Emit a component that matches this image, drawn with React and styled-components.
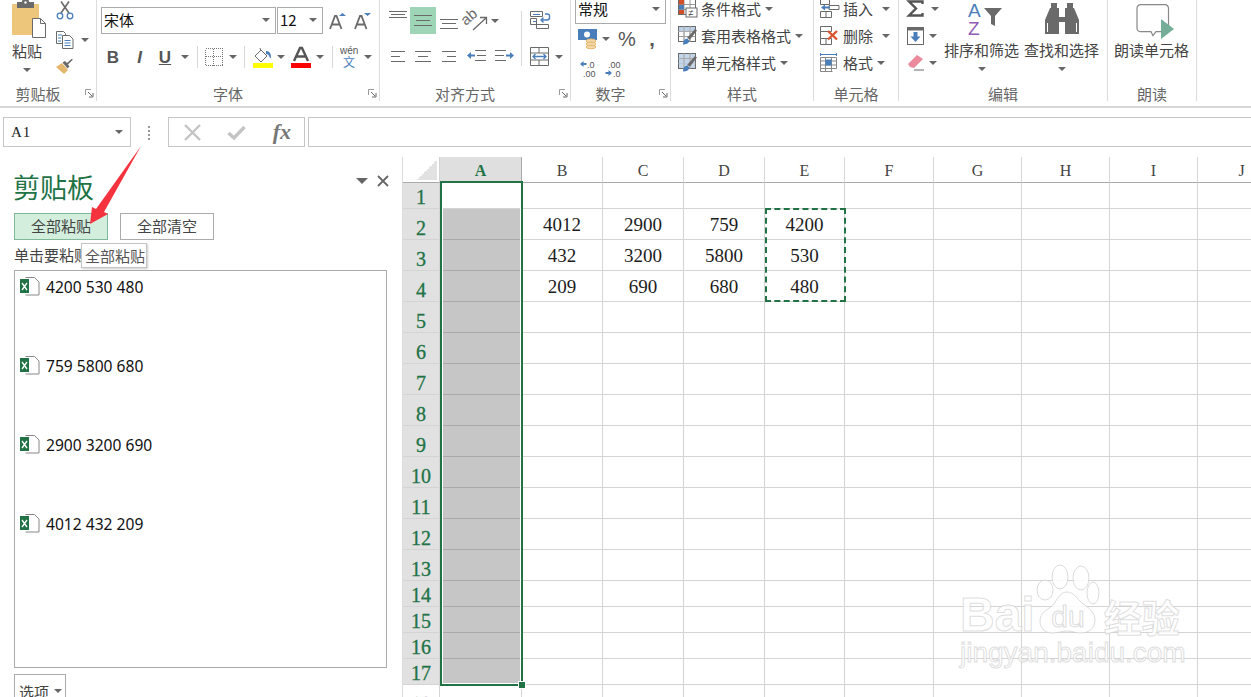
import React from "react";
import styled, { createGlobalStyle } from "styled-components";

const UI = `"Noto Sans CJK SC", "Noto Sans", sans-serif`;
const SERIF = `"Liberation Serif", "Noto Sans CJK SC", serif`;
const GREEN = "#217346";
const GRAY = "#6a6a6a";
const BLUE = "#4a7ebb";

const Global = createGlobalStyle`
  html, body { margin: 0; padding: 0; background: #fff; overflow: hidden; }
  * { box-sizing: border-box; }
`;

const Page = styled.div`
  position: relative;
  width: 1251px;
  height: 697px;
  overflow: hidden;
  font-family: ${UI};
  color: #444;
  background: #fff;
`;

/* ---------- ribbon ---------- */
const Ribbon = styled.div`
  display: flex;
  height: 113px;
  margin-top: -5px;
  padding-bottom: 5px;
  border-bottom: 2px solid #d6d6d6;
`;
const Group = styled.div`
  position: relative;
  display: flex;
  flex-direction: column;
  width: ${(p) => p.$w}px;
  border-right: 1px solid #dcdcdc;
`;
const GroupBody = styled.div`
  flex: 1;
  display: flex;
  min-height: 0;
  padding-left: ${(p) => p.$pl || 0}px;
`;
const GroupLabel = styled.div`
  height: 16px;
  margin-bottom: -1px;
  padding-right: ${(p) => (p.$inset ? 20 : 0)}px;
  font-size: 15px;
  line-height: 16px;
  text-align: center;
  color: #666;
`;
const Launcher = styled.svg`
  position: absolute;
  right: 2px;
  bottom: 3px;
  width: 9px;
  height: 9px;
`;
const Caret = styled.i`
  display: block;
  flex: none;
  width: 0;
  height: 0;
  margin-left: ${(p) => p.$ml || 0}px;
  border-left: 4px solid transparent;
  border-right: 4px solid transparent;
  border-top: 4px solid #666;
`;
const BigButton = styled.div`
  display: flex;
  flex-direction: column;
  align-items: center;
  width: ${(p) => p.$w || 75}px;
  margin-left: ${(p) => p.$ml || 0}px;
`;
const BigIcon = styled.div`
  display: flex;
  align-items: flex-end;
  justify-content: ${(p) => (p.$left ? "flex-start" : "center")};
  height: ${(p) => p.$h || 42}px;
  padding-left: ${(p) => p.$pl || 0}px;
  width: 100%;
`;
const BigText = styled.div`
  margin-top: ${(p) => p.$mt ?? 3}px;
  font-size: 15px;
  line-height: 20px;
  white-space: nowrap;
`;
const BigCaret = styled(Caret)`
  margin-top: 7px;
`;
const SmallColumn = styled.div`
  display: flex;
  flex-direction: column;
  flex: none;
  width: ${(p) => (p.$w ? `${p.$w}px` : "auto")};
  margin-left: ${(p) => p.$ml || 0}px;
  padding-top: ${(p) => p.$pt || 0}px;
  gap: ${(p) => p.$gap || 0}px;
`;
const SmallItem = styled.div`
  display: flex;
  align-items: center;
  height: ${(p) => p.$h || 27}px;
`;
const FontFields = styled.div`
  display: flex;
  flex-direction: column;
  padding-top: 12px;
  gap: 11px;
`;
const ToolRow = styled.div`
  display: flex;
  align-items: center;
  height: ${(p) => p.$h || 24}px;
  margin-top: ${(p) => p.$mt || 0}px;
`;
const Select = styled.div`
  display: flex;
  align-items: center;
  justify-content: space-between;
  width: ${(p) => p.$w}px;
  height: ${(p) => p.$h || 27}px;
  padding: 0 5px 2px 2px;
  border: 1px solid #ababab;
  margin-left: ${(p) => p.$ml || 0}px;
  font-size: 15px;
  color: #111;
`;
const Tool = styled.div`
  display: flex;
  align-items: center;
  justify-content: center;
  flex: none;
  width: ${(p) => p.$w}px;
  height: ${(p) => p.$h || 24}px;
  margin-left: ${(p) => p.$ml || 0}px;
  background: ${(p) => (p.$on ? "#9fd5b7" : "transparent")};
`;
const Glyph = styled.span`
  font-family: "Liberation Sans", sans-serif;
  font-size: ${(p) => p.$size || 17}px;
  font-weight: ${(p) => (p.$light ? 400 : 700)};
  font-style: ${(p) => (p.$italic ? "italic" : "normal")};
  text-decoration: ${(p) => (p.$under ? "underline" : "none")};
  color: ${(p) => p.$color || "#555"};
  line-height: 1;
`;
const RowSep = styled.i`
  display: block;
  flex: none;
  width: 1px;
  height: 22px;
  margin-left: ${(p) => p.$ml || 0}px;
  background: #d8d8d8;
`;
const AlignTools = styled.div`
  display: flex;
  flex-direction: column;
  width: 135px;
  padding-top: 12px;
  gap: 10px;
`;
const AlignSep = styled.i`
  display: block;
  flex: none;
  width: 1px;
  height: 55px;
  margin-top: 16px;
  background: #d8d8d8;
`;
const WrapTools = styled.div`
  display: flex;
  flex-direction: column;
  padding: 16px 0 0 8px;
  gap: 18px;
`;
const StyleList = styled.div`
  display: grid;
  grid-template-rows: repeat(3, 27px);
`;
const StyleItem = styled.div`
  display: flex;
  align-items: center;
  font-size: 15px;
  line-height: 20px;
  gap: 4px;
`;

/* ---------- formula bar ---------- */
const FormulaBar = styled.div`
  display: flex;
  align-items: flex-start;
  height: 49px;
  padding: 9px 0 0 3px;
`;
const NameBox = styled.div`
  display: flex;
  align-items: center;
  justify-content: space-between;
  width: 128px;
  height: 30px;
  padding: 0 7px;
  border: 1px solid #c6c6c6;
  font-family: ${SERIF};
  font-size: 15px;
  letter-spacing: 1px;
  color: #222;
`;
const DragDots = styled.div`
  display: flex;
  flex-direction: column;
  gap: 2px;
  width: 37px;
  padding: 9px 0 0 17px;
  i { display: block; width: 2px; height: 2px; background: #999; }
`;
const FormulaButtons = styled.div`
  display: flex;
  align-items: center;
  justify-content: space-between;
  width: 137px;
  height: 30px;
  padding: 0 13px 0 15px;
  border: 1px solid #c6c6c6;
`;
const FxMark = styled.span`
  font-family: "Liberation Serif", serif;
  font-style: italic;
  font-weight: 700;
  font-size: 22px;
  line-height: 1;
  color: #777;
`;
const FormulaInput = styled.div`
  flex: 1;
  height: 30px;
  margin-left: 3px;
  border: 1px solid #c6c6c6;
  border-right: 0;
`;

/* ---------- main ---------- */
const Main = styled.div`
  display: flex;
  height: 540px;
`;
const Pane = styled.div`
  flex: none;
  width: 403px;
  padding-left: 14px;
  border-right: 1px solid #dcdcdc;
`;
const PaneHead = styled.div`
  display: flex;
  align-items: center;
  height: 56px;
  padding-top: 4px;
`;
const PaneTitle = styled.div`
  flex: 1;
  margin-left: -1px;
  font-size: 27px;
  line-height: 36px;
  color: ${GREEN};
`;
const PaneActions = styled.div`
  display: flex;
  align-items: center;
  gap: 9px;
  padding-right: 13px;
  margin-bottom: 12px;
`;
const PaneCaret = styled.i`
  display: block;
  width: 0;
  height: 0;
  border-left: 6px solid transparent;
  border-right: 6px solid transparent;
  border-top: 6px solid #666;
`;
const ButtonRow = styled.div`
  display: flex;
  gap: 12px;
`;
const PaneButton = styled.div`
  display: flex;
  align-items: center;
  justify-content: center;
  width: 94px;
  height: 27px;
  padding-bottom: 2px;
  font-size: 15px;
  border: 1px solid ${(p) => (p.$active ? "#7fb99a" : "#ababab")};
  background: ${(p) => (p.$active ? "#d3eedd" : "#fff")};
`;
const Hint = styled.div`
  height: 30px;
  font-size: 15px;
  line-height: 29px;
`;
const ClipList = styled.div`
  width: 373px;
  height: 398px;
  padding-left: 5px;
  border: 1px solid #ababab;
`;
const ClipItem = styled.div`
  display: flex;
  gap: 6px;
  height: 79px;
  padding-top: 6px;
  font-family: "Noto Sans", sans-serif;
  font-size: 15.6px;
  line-height: 20px;
  color: #111;
`;
const OptionsButton = styled.div`
  display: flex;
  align-items: center;
  gap: 5px;
  width: 52px;
  height: 34px;
  margin-top: 6px;
  padding-left: 4px;
  border: 1px solid #ababab;
  font-size: 15px;
  white-space: nowrap;
`;

const Sheet = styled.div`
  position: relative;
  flex: 1;
  overflow: hidden;
`;
const SheetGrid = styled.div`
  display: grid;
  width: 920px;
  grid-template-columns: 37px 82px 81px 81px 81px 80px 89px 88px 88px 88px 88px;
  grid-template-rows: 26px ${(p) => p.$rows};
`;
const Corner = styled.div`
  border-bottom: 1px solid #aaa;
  border-right: 1px solid #d4d4d4;
  background: linear-gradient(135deg, #fff 50%, #e2e2e2 50%) no-repeat right 2px bottom 2px / 20px 20px;
`;
const ColHead = styled.div`
  display: flex;
  justify-content: center;
  padding-top: 4px;
  font-family: ${SERIF};
  font-size: 16px;
  line-height: 20px;
  border-right: 1px solid ${(p) => (p.$on ? "#aaa" : "#d8d8d8")};
  border-bottom: 1px solid #aaa;
  color: ${(p) => (p.$on ? GREEN : "#444")};
  font-weight: ${(p) => (p.$on ? 700 : 400)};
  background: ${(p) => (p.$on ? "#dfdfdf" : "#fff")};
`;
const RowHead = styled.div`
  display: flex;
  align-items: flex-end;
  justify-content: center;
  font-family: ${SERIF};
  font-size: 20px;
  line-height: 22px;
  -webkit-text-stroke: 0.3px ${(p) => (p.$on ? GREEN : "#555")};
  color: ${(p) => (p.$on ? GREEN : "#555")};
  background: ${(p) => (p.$on ? "#e1e1e1" : "#fff")};
  border-right: 1px solid #d4d4d4;
  border-bottom: 1px solid #d4d4d4;
`;
const Cell = styled.div`
  display: flex;
  align-items: flex-end;
  justify-content: center;
  padding-bottom: 2px;
  font-family: ${SERIF};
  font-size: 19px;
  line-height: 24px;
  color: #1c1c1c;
  background: ${(p) => (p.$sel ? "#c6c6c6" : "#fff")};
  border-right: 1px solid #d4d4d4;
  border-bottom: 1px solid ${(p) => (p.$sel ? "#a9a9a9" : "#d4d4d4")};
`;
const Selection = styled.div`
  position: absolute;
  left: 37px;
  top: 24px;
  width: 83px;
  height: 505px;
  border: 2px solid ${GREEN};
  box-shadow: inset 0 0 0 1px #fff;
  pointer-events: none;
`;
const FillHandle = styled.i`
  position: absolute;
  right: -4px;
  bottom: -4px;
  width: 6px;
  height: 6px;
  background: ${GREEN};
  outline: 1px solid #fff;
`;
const Marquee = styled.div`
  position: absolute;
  left: 362px;
  top: 51px;
  width: 81px;
  height: 94px;
  border: 2px dashed ${GREEN};
`;

/* ---------- overlays ---------- */
const Tooltip = styled.div`
  position: absolute;
  left: 81px;
  top: 243px;
  width: 66px;
  height: 25px;
  padding-left: 3px;
  border: 1px solid #c4c4c4;
  background: #fff;
  box-shadow: 1px 1px 2px rgba(0, 0, 0, 0.2);
  font-size: 15px;
  line-height: 23px;
  color: #555;
  white-space: nowrap;
`;
const Arrow = styled.svg`
  position: absolute;
  left: 85px;
  top: 143px;
  width: 60px;
  height: 85px;
`;
const Watermark = styled.div`
  position: absolute;
  left: 960px;
  top: 563px;
  pointer-events: none;
  color: rgba(255, 255, 255, 0.85);
  -webkit-text-stroke: 1px rgba(200, 200, 200, 0.6);
`;
const MarkRow = styled.div`
  display: flex;
  align-items: flex-end;
  height: 72px;
`;
const MarkBai = styled.span`
  font-family: "Liberation Sans", sans-serif;
  font-weight: 700;
  font-size: 48px;
  line-height: 52px;
  margin-right: 2px;
  margin-bottom: -6px;
`;
const MarkCn = styled.span`
  font-family: ${UI};
  font-weight: 700;
  font-size: 38px;
  line-height: 44px;
  margin-left: 5px;
  margin-bottom: -3px;
  white-space: nowrap;
`;
const MarkUrl = styled.div`
  margin-top: 1px;
  font-family: "Liberation Sans", sans-serif;
  font-size: 28px;
  line-height: 34px;
  white-space: nowrap;
`;

/* ---------- icons ---------- */
const Svg = ({ w, h, children }) => (
  <svg width={w} height={h} viewBox={`0 0 ${w} ${h}`} fill="none" style={{ display: "block", flex: "none", overflow: "visible" }}>
    {children}
  </svg>
);

const PasteIcon = () => (
  <Svg w={35} h={39}>
    <rect x="0" y="5" width="27" height="31" rx="1" fill="#edc67c" />
    <path d="M5 3h5a3 3 0 0 1 7 0h5v6H5z" fill={GRAY} />
    <circle cx="13.5" cy="3.5" r="1.2" fill="#fff" />
    <path d="M20.5 19.5h8l5 5v14h-13z" fill="#fff" stroke={GRAY} />
    <path d="M28.5 19.5v5h5" stroke={GRAY} />
  </Svg>
);
const ScissorsIcon = () => (
  <Svg w={18} h={19}>
    <path d="M5 0.5l8 11.5M13 0.5L5 12" stroke={GRAY} strokeWidth="1.6" />
    <circle cx="4" cy="15" r="2.8" stroke={BLUE} strokeWidth="1.3" />
    <circle cx="14" cy="15" r="2.8" stroke={BLUE} strokeWidth="1.3" />
  </Svg>
);
const CopyIcon = () => (
  <Svg w={18} h={18}>
    <path d="M0.5 0.5h7l2 2v10h-9z" fill="#fff" stroke={GRAY} />
    <path d="M6.5 4.5h7l3.5 3.5v9.5H6.5z" fill="#fff" stroke={GRAY} />
    <path d="M2 4h4M2 7h3M2 10h3M8.5 9.5h6M8.5 12h6M8.5 14.5h6" stroke={BLUE} />
  </Svg>
);
const BrushIcon = () => (
  <Svg w={18} h={16}>
    <path d="M0 8l6-4 6 7-4 4z" fill="#e3b76e" />
    <path d="M6.5 3.5l5 6 2-2-1.5-2 5-5-1.5-.5-4.5 4-2-2z" fill={GRAY} />
  </Svg>
);
const GrowIcon = ({ down }) => (
  <Svg w={17} h={18}>
    <path d={down ? "M10 1h7l-3.5 3z" : "M10 4h7l-3.5-3z"} fill={BLUE} />
    <path d="M1 17L6 4h1.5l5 13M3 12.5h7.5" stroke={GRAY} strokeWidth="1.8" />
  </Svg>
);
const BordersIcon = () => (
  <Svg w={18} h={18}>
    <path d="M.5.5h17v17H.5zM8.500 .5v17M.5 8.500h17" stroke="#777" strokeDasharray="1 1" shapeRendering="crispEdges" />
  </Svg>
);
const FillIcon = () => (
  <Svg w={21} h={21}>
    <path d="M3 9l6-6 6 6-6 6z" fill="#fff" stroke={GRAY} />
    <path d="M8 1l1 3" stroke={GRAY} />
    <path d="M14 4c3 0 5 2 5 6 0 1-1 1.500-1.500 0-.5-2-1.500-3-3.500-3z" fill={BLUE} />
    <rect x="1" y="16" width="20" height="5" fill="#ffff00" />
  </Svg>
);
const FontColorIcon = () => (
  <Svg w={20} h={21}>
    <path d="M3 14L9 1h2l6 13M5.500 9.500h9" stroke="#555" strokeWidth="2.400" />
    <rect x="0" y="16" width="20" height="5" fill="#ff0000" />
  </Svg>
);
const WenIcon = () => (
  <Svg w={18} h={23}>
    <text x="0" y="8" fontFamily="Liberation Sans" fontSize="10" fill="#555">wén</text>
    <text x="3" y="21" fontFamily="Noto Sans CJK SC" fontSize="12" fill={BLUE}>文</text>
  </Svg>
);
const Lines = ({ w = 18, h = 24, rows }) => (
  <Svg w={w} h={h}>
    {rows.map(([x1, x2, y]) => (
      <path key={`${x1}-${y}`} d={`M${x1} ${y}.5H${x2}`} stroke={GRAY} />
    ))}
  </Svg>
);
const OrientIcon = () => (
  <Svg w={23} h={20}>
    <text x="0" y="13" transform="rotate(-40 3 13)" fontFamily="Liberation Sans" fontSize="15" fill={GRAY}>ab</text>
    <path d="M8 19l13-12M15 6.500h6.500V13" stroke={GRAY} strokeWidth="1.300" />
  </Svg>
);
const IndentIcon = ({ flip }) => (
  <Svg w={19} h={14}>
    <g transform={flip ? "translate(19 0) scale(-1 1)" : undefined}>
      <path d="M8 1.500h11M10 6.500h9M8 11.500h11" stroke={GRAY} />
      <path d="M0 6.500L4 3v2.500h4v2H4V10z" fill={BLUE} />
    </g>
  </Svg>
);
const WrapIcon = () => (
  <Svg w={20} h={18}>
    <path d="M.5.5h12v5H.5zM.5 7.500h6v10h12v-4H.5z" stroke={GRAY} />
    <path d="M3 3.500h7M3 10.500h3" stroke={BLUE} />
    <path d="M15 3h2.500a2 2 0 0 1 2 2v1.500a2.500 2.500 0 0 1-2.500 2.500h-5M13.500 6.500L11 9l2.500 2.500" stroke={BLUE} strokeWidth="1.400" />
  </Svg>
);
const MergeIcon = () => (
  <Svg w={19} h={19}>
    <path d="M.5.500h18v18H.5zM.5 6h18M.5 13h18M9 .5V6M9 13v5.500" stroke={GRAY} />
    <path d="M3 9.500h13M5.500 7L3 9.500 5.500 12M13.500 7l2.500 2.500-2.500 2.500" stroke={BLUE} strokeWidth="1.300" />
  </Svg>
);
const MoneyIcon = () => (
  <Svg w={20} h={20}>
    <rect x="0" y="0" width="19" height="11" fill={BLUE} />
    <circle cx="9" cy="5.500" r="3" fill="#fff" />
    <ellipse cx="13" cy="12" rx="5" ry="2" fill="#f3d8a6" stroke="#e3b76e" />
    <ellipse cx="13" cy="15" rx="5" ry="2" fill="#f3d8a6" stroke="#e3b76e" />
    <ellipse cx="13" cy="18" rx="5" ry="1.700" fill="#f3d8a6" stroke="#e3b76e" />
  </Svg>
);
const DecimalIcon = ({ more }) => (
  <Svg w={16} h={18}>
    <text x={more ? 7 : 3} y="7.500" fontFamily="Liberation Sans" fontSize="9" fill="#555">{more ? ".0" : ".00"}</text>
    <text x={more ? 3 : 8} y="16.500" fontFamily="Liberation Sans" fontSize="9" fill="#555">{more ? ".00" : ".0"}</text>
    {more ? (
      <path d="M0 4l3.500-3v2h3v2h-3v2z" fill={BLUE} />
    ) : (
      <path d="M7 13l-3.500-3v2h-3v2h3v2z" fill={BLUE} />
    )}
  </Svg>
);
const TableBase = () => (
  <>
    <rect x=".5" y=".5" width="17" height="15" fill="#fff" stroke={GRAY} />
    <path d="M.5 5.500h17M.5 10.500h17M6 .5v15M12 .5v15" stroke="#999" />
  </>
);
const CondIcon = () => (
  <Svg w={19} h={19}>
    <TableBase />
    <rect x="1" y="1" width="5" height="4.500" fill="#d24f2a" />
    <rect x="1" y="6" width="5" height="4.500" fill={BLUE} />
    <rect x="1" y="11" width="5" height="4" fill="#d24f2a" />
    <rect x="8" y="9" width="11" height="9" fill="#fff" stroke={GRAY} />
    <text x="10.500" y="16.500" fontFamily="Liberation Sans" fontSize="9" fill="#444">≠</text>
  </Svg>
);
const TableBrushIcon = ({ tint }) => (
  <Svg w={19} h={19}>
    <TableBase />
    <rect x="1" y="1" width="16" height={tint ? 14 : 4} fill="#bcd0e6" opacity={tint ? 0.9 : 1} />
    <path d="M.5 5.500h17M6 .5v15M12 .5v15" stroke="#aaa" />
    <path d="M9 12l8-9 2 1.500-7 9z" fill={GRAY} />
    <path d="M5 18.500c0-4 2-5.500 4-6l2.500 2c-1 3-3 4-6.500 4z" fill={BLUE} />
  </Svg>
);
const InsertIcon = () => (
  <Svg w={19} h={19}>
    <path d="M.5.500h9v5h-9zM.5 12.500h11v6H.5zM6 12.500v6" stroke={GRAY} />
    <path d="M9 6.500h10v4H9z" stroke={GRAY} fill="#fff" />
    <path d="M1 8.500l4-3v2h5v2H5v2z" fill={BLUE} />
  </Svg>
);
const DeleteIcon = () => (
  <Svg w={19} h={19}>
    <path d="M.5.500h11v5H.5zM.5 12.500h11v6H.5zM6 12.500v6M.5 5.500v7" stroke={GRAY} />
    <path d="M8 5l9 8.500M17 5l-9 8.500" stroke="#d9552f" strokeWidth="2.400" />
  </Svg>
);
const FormatIcon = () => (
  <Svg w={19} h={19}>
    <path d="M.5 1.500h16M.5 0v3M16.500 0v3" stroke={BLUE} />
    <path d="M.5 4.500h16v11H.5zM.5 8h16M.5 12h16M5.500 4.500v14M11.500 4.500v14M.5 15.500v3h12" stroke="#888" />
    <rect x="5.500" y="6.500" width="6" height="6" fill={BLUE} />
  </Svg>
);
const SigmaIcon = () => (
  <Svg w={17} h={17}>
    <path d="M15.500 4V1.500H2L9 8.500 2 15.500h13.500V13" stroke="#555" strokeWidth="2.400" />
  </Svg>
);
const FillDownIcon = () => (
  <Svg w={17} h={18}>
    <rect x=".5" y=".5" width="16" height="17" fill="#fff" stroke={GRAY} />
    <path d="M0 .5h17v3H0z" fill={GRAY} />
    <path d="M8.500 15L3.500 9.500h3V5h4v4.500h3z" fill={BLUE} />
  </Svg>
);
const EraserIcon = () => (
  <Svg w={18} h={17}>
    <path d="M1 10L10 1l6 4-9 9-4-1z" fill="#ea8a9c" />
    <path d="M7 16h10" stroke={GRAY} />
  </Svg>
);
const SortIcon = () => (
  <Svg w={35} h={33}>
    <text x="0" y="15" fontFamily="Liberation Sans" fontSize="19" fill={BLUE}>A</text>
    <text x="0" y="33" fontFamily="Liberation Sans" fontSize="19" fill="#8f5cb4">Z</text>
    <path d="M16 6h18l-7 8v10l-4-2v-8z" fill={GRAY} />
  </Svg>
);
const BinocularsIcon = () => (
  <Svg w={34} h={31}>
    <path d="M6 0h6v5h2v9h6V5h2V0h6v5h1l5 12v14H20V19h-6v12H0V17L5 5h1z" fill={GRAY} />
    <path d="M2.500 20v9M31.500 20v9" stroke="#fff" />
  </Svg>
);
const ReadIcon = () => (
  <Svg w={38} h={35}>
    <path d="M5 .7h24a3.500 3.500 0 0 1 3.500 3.500v20a3.500 3.500 0 0 1-3.500 3.500H20l-3 4-2-4H5A3.500 3.500 0 0 1 1 24.200v-20A3.500 3.500 0 0 1 5 .7z" fill="#fff" stroke="#888" strokeWidth="1.200" />
    <path d="M25 15l13 10-13 10z" fill="#74ae98" />
  </Svg>
);
const LauncherIcon = () => (
  <Launcher viewBox="0 0 9 9" fill="none">
    <path d="M.5 6V.5H6" stroke="#999" />
    <path d="M3 3l4 4M8 4v4H4" stroke="#666" />
  </Launcher>
);
const CrossIcon = ({ size = 14, color = "#c4c4c4", sw = 2.2 }) => (
  <Svg w={size} h={size}>
    <path d={`M1 1L${size - 1} ${size - 1}M${size - 1} 1L1 ${size - 1}`} stroke={color} strokeWidth={sw} />
  </Svg>
);
const CheckIcon = () => (
  <Svg w={19} h={15}>
    <path d="M1.500 8l5.500 5L17.500 2" stroke="#c4c4c4" strokeWidth="3.400" />
  </Svg>
);
const ExcelClip = () => (
  <Svg w={20} h={19}>
    <path d="M5.500.5h9l4.500 4.500v13H5.500" fill="#fff" stroke="#888" />
    <rect x="0" y="2" width="9" height="14" fill={GREEN} />
    <path d="M2 6l5 7M7 6l-5 7" stroke="#fff" strokeWidth="1.300" />
  </Svg>
);

/* ---------- data ---------- */
const columns = ["A", "B", "C", "D", "E", "F", "G", "H", "I", "J"];
const rowHeights = [26, 31, 31, 31, 31, 31, 31, 31, 31, 31, 31, 31, 31, 26, 26, 26, 26, 31];
const values = {
  2: ["4012", "2900", "759", "4200"],
  3: ["432", "3200", "5800", "530"],
  4: ["209", "690", "680", "480"],
};
const clips = ["4200 530 480", "759 5800 680", "2900 3200 690", "4012 432 209"];

export default function App() {
  return (
    <Page>
      <Global />
      <Ribbon>
        <Group $w={97}>
          <GroupBody $pl={13}>
            <BigButton $w={30} $ml={-1}>
              <BigIcon $h={43} $left><PasteIcon /></BigIcon>
              <BigText>粘贴</BigText>
              <BigCaret />
            </BigButton>
            <SmallColumn $pt={6} $gap={10} $ml={14}>
              <SmallItem $h={19}><ScissorsIcon /></SmallItem>
              <SmallItem $h={19}><CopyIcon /><Caret $ml={7} /></SmallItem>
              <SmallItem $h={16}><BrushIcon /></SmallItem>
            </SmallColumn>
          </GroupBody>
          <GroupLabel $inset>剪贴板</GroupLabel>
          <LauncherIcon />
        </Group>

        <Group $w={283}>
          <GroupBody $pl={3}>
            <FontFields>
              <ToolRow $h={27}>
                <Select $w={175} $ml={1}>宋体<Caret /></Select>
                <Select $w={46} $ml={1}>12<Caret /></Select>
                <Tool $w={29}><GrowIcon /></Tool>
                <Tool $w={20}><GrowIcon down /></Tool>
              </ToolRow>
              <ToolRow>
                <Tool $w={26}><Glyph>B</Glyph></Tool>
                <Tool $w={27}><Glyph $italic>I</Glyph></Tool>
                <Tool $w={24}><Glyph $under>U</Glyph></Tool>
                <Caret $ml={4} />
                <RowSep $ml={8} />
                <Tool $w={31}><BordersIcon /></Tool>
                <Caret />
                <RowSep $ml={7} />
                <Tool $w={34}><FillIcon /></Tool>
                <Caret $ml={-2} />
                <Tool $w={32}><FontColorIcon /></Tool>
                <Caret $ml={-1} />
                <RowSep $ml={8} />
                <Tool $w={32}><WenIcon /></Tool>
                <Caret $ml={-1} />
              </ToolRow>
            </FontFields>
          </GroupBody>
          <GroupLabel $inset>字体</GroupLabel>
          <LauncherIcon />
        </Group>

        <Group $w={191}>
          <GroupBody $pl={6}>
            <AlignTools>
              <ToolRow $h={27}>
                <Tool $w={24} $h={27}><Lines h={27} rows={[[0, 18, 4], [2, 16, 7], [0, 18, 10]]} /></Tool>
                <Tool $w={26} $h={27} $on><Lines h={27} rows={[[0, 18, 8], [2, 16, 13], [0, 18, 18]]} /></Tool>
                <Tool $w={26} $h={27}><Lines h={27} rows={[[0, 18, 12], [2, 16, 16], [0, 18, 21]]} /></Tool>
                <Tool $w={28} $h={27}><OrientIcon /></Tool>
                <Caret $ml={1} />
              </ToolRow>
              <ToolRow>
                <Tool $w={24}><Lines w={14} rows={[[0, 14, 7], [0, 9, 12], [0, 14, 17]]} /></Tool>
                <Tool $w={26}><Lines w={16} rows={[[0, 16, 7], [3, 13, 12], [0, 16, 17]]} /></Tool>
                <Tool $w={26}><Lines w={14} rows={[[0, 14, 7], [5, 14, 12], [0, 14, 17]]} /></Tool>
                <Tool $w={29}><IndentIcon /></Tool>
                <Tool $w={26}><IndentIcon flip /></Tool>
              </ToolRow>
            </AlignTools>
            <AlignSep />
            <WrapTools>
              <ToolRow $h={18}><WrapIcon /></ToolRow>
              <ToolRow $h={19}><MergeIcon /><Caret $ml={6} /></ToolRow>
            </WrapTools>
          </GroupBody>
          <GroupLabel $inset>对齐方式</GroupLabel>
          <LauncherIcon />
        </Group>

        <Group $w={100}>
          <GroupBody $pl={4}>
            <SmallColumn>
              <Select $w={91} $h={29}>常规<Caret /></Select>
              <ToolRow $mt={3}>
                <Tool $w={25}><MoneyIcon /></Tool>
                <Caret $ml={2} />
                <Tool $w={30} $ml={2}><Glyph $size={20} $light>%</Glyph></Tool>
                <Tool $w={20}><Glyph $size={20}>,</Glyph></Tool>
              </ToolRow>
              <ToolRow $mt={6}>
                <Tool $w={25}><DecimalIcon more /></Tool>
                <Tool $w={26}><DecimalIcon /></Tool>
              </ToolRow>
            </SmallColumn>
          </GroupBody>
          <GroupLabel $inset>数字</GroupLabel>
          <LauncherIcon />
        </Group>

        <Group $w={143}>
          <GroupBody $pl={7}>
            <StyleList>
              <StyleItem><CondIcon />条件格式<Caret /></StyleItem>
              <StyleItem><TableBrushIcon />套用表格格式<Caret /></StyleItem>
              <StyleItem><TableBrushIcon tint />单元格样式<Caret /></StyleItem>
            </StyleList>
          </GroupBody>
          <GroupLabel>样式</GroupLabel>
        </Group>

        <Group $w={85}>
          <GroupBody $pl={6}>
            <StyleList>
              <StyleItem><InsertIcon />插入<Caret $ml={5} /></StyleItem>
              <StyleItem><DeleteIcon />删除<Caret $ml={5} /></StyleItem>
              <StyleItem><FormatIcon />格式<Caret /></StyleItem>
            </StyleList>
          </GroupBody>
          <GroupLabel>单元格</GroupLabel>
        </Group>

        <Group $w={209}>
          <GroupBody $pl={8}>
            <SmallColumn $w={37}>
              <SmallItem><SigmaIcon /><Caret $ml={7} /></SmallItem>
              <SmallItem><FillDownIcon /><Caret $ml={5} /></SmallItem>
              <SmallItem><EraserIcon /><Caret $ml={4} /></SmallItem>
            </SmallColumn>
            <BigButton>
              <BigIcon $h={40} $pl={7}><SortIcon /></BigIcon>
              <BigText $mt={5}>排序和筛选</BigText>
              <BigCaret />
            </BigButton>
            <BigButton $ml={5}>
              <BigIcon $h={39}><BinocularsIcon /></BigIcon>
              <BigText $mt={6}>查找和选择</BigText>
              <BigCaret />
            </BigButton>
          </GroupBody>
          <GroupLabel>编辑</GroupLabel>
        </Group>

        <Group $w={89}>
          <GroupBody $pl={6}>
            <BigButton>
              <BigIcon $h={44} $pl={6}><ReadIcon /></BigIcon>
              <BigText $mt={1}>朗读单元格</BigText>
            </BigButton>
          </GroupBody>
          <GroupLabel>朗读</GroupLabel>
        </Group>
      </Ribbon>

      <FormulaBar>
        <NameBox>A1<Caret /></NameBox>
        <DragDots><i /><i /><i /><i /></DragDots>
        <FormulaButtons>
          <CrossIcon size={17} sw={2.4} />
          <CheckIcon />
          <FxMark>fx</FxMark>
        </FormulaButtons>
        <FormulaInput />
      </FormulaBar>

      <Main>
        <Pane>
          <PaneHead>
            <PaneTitle>剪贴板</PaneTitle>
            <PaneActions>
              <PaneCaret />
              <CrossIcon size={12} color="#666" sw={1.8} />
            </PaneActions>
          </PaneHead>
          <ButtonRow>
            <PaneButton $active>全部粘贴</PaneButton>
            <PaneButton>全部清空</PaneButton>
          </ButtonRow>
          <Hint>单击要粘贴</Hint>
          <ClipList>
            {clips.map((c) => (
              <ClipItem key={c}><ExcelClip />{c}</ClipItem>
            ))}
          </ClipList>
          <OptionsButton>选项<Caret /></OptionsButton>
        </Pane>

        <Sheet>
          <SheetGrid $rows={rowHeights.map((h) => `${h}px`).join(" ")}>
            <Corner />
            {columns.map((c) => (
              <ColHead key={c} $on={c === "A"}>{c}</ColHead>
            ))}
            {rowHeights.map((_, i) => {
              const row = i + 1;
              const vals = values[row] || [];
              return (
                <React.Fragment key={row}>
                  <RowHead $on={row <= 17}>{row}</RowHead>
                  {columns.map((c, j) => (
                    <Cell key={c} $sel={j === 0 && row > 1 && row <= 17}>
                      {j > 0 ? vals[j - 1] : null}
                    </Cell>
                  ))}
                </React.Fragment>
              );
            })}
          </SheetGrid>
          <Selection><FillHandle /></Selection>
          <Marquee />
        </Sheet>
      </Main>

      <Tooltip>全部粘贴</Tooltip>
      <Arrow viewBox="0 0 60 85">
        <path d="M56 3L19 69l4 2L5 81l2-17 4 2z" fill="#f5333f" />
      </Arrow>

      <Watermark>
        <MarkRow>
          <MarkBai>Bai</MarkBai>
          <Svg w={62} h={72}>
            <g fill="rgba(255,255,255,.85)" stroke="rgba(200,200,200,.65)">
              <ellipse cx="8" cy="27" rx="8" ry="10" />
              <ellipse cx="23" cy="14" rx="8" ry="12" />
              <ellipse cx="44" cy="15" rx="8" ry="12" />
              <ellipse cx="56" cy="30" rx="6" ry="11" />
              <path d="M30 29c7 0 10 7 15 11 7 5 13 9 13 17 0 8-6 13-14 13-6 0-9-2-14-2s-9 2-15 2c-8 0-12-6-12-12 0-9 8-11 13-16 4-5 7-13 14-13z" />
            </g>
            <text x="31" y="64" textAnchor="middle" fontFamily="Liberation Sans" fontSize="30" fill="rgba(255,255,255,.85)" stroke="rgba(200,200,200,.65)" strokeWidth="1">du</text>
          </Svg>
          <MarkCn>经验</MarkCn>
        </MarkRow>
        <MarkUrl>jingyan.baidu.com</MarkUrl>
      </Watermark>
    </Page>
  );
}
